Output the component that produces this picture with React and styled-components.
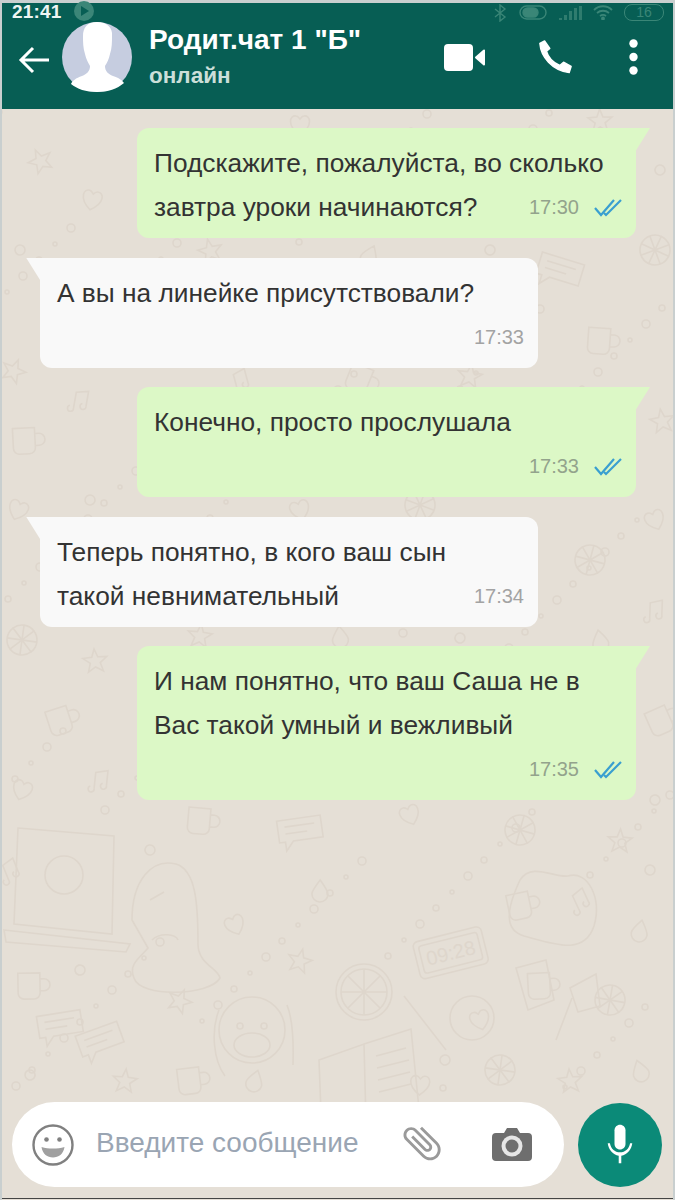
import React from "react";
import styled, { createGlobalStyle } from "styled-components";

const Global = createGlobalStyle`
  html, body { margin: 0; padding: 0; }
  body { background: #c9cfcf; font-family: "Liberation Sans", Arial, sans-serif; }
`;

const Frame = styled.div`
  width: 675px;
  height: 1200px;
  box-sizing: border-box;
  padding: 3px 2px 0 2px;
  display: flex;
  flex-direction: column;
  background: #c9cfcf;
`;

const Header = styled.header`
  height: 106px;
  flex: none;
  background: #075e54;
  display: flex;
  flex-direction: column;
  color: #fff;
`;

const StatusBar = styled.div`
  height: 15px;
  padding: 0 9px 0 10px;
  display: flex;
  align-items: center;
  gap: 12px;
`;

const Clock = styled.span`
  font-size: 19px;
  font-weight: 700;
  color: #eef5f3;
  letter-spacing: 0.2px;
  margin-top: 3px;
`;

const StatusIcons = styled.div`
  margin-left: auto;
  display: flex;
  align-items: center;
  gap: 11px;
  margin-top: 4px;
`;

const Battery = styled.span`
  width: 38px;
  height: 15px;
  border: 1.5px solid #3a8677;
  border-radius: 8px;
  color: #3a8677;
  font-size: 14px;
  line-height: 15px;
  text-align: center;
`;

const TopRow = styled.div`
  flex: 1;
  display: flex;
  align-items: flex-start;
  padding-left: 16px;
`;

const BackIcon = styled.svg`
  width: 32px;
  height: 28px;
  margin-top: 28px;
  flex: none;
`;

const Avatar = styled.svg`
  width: 70px;
  height: 70px;
  margin: 4px 0 0 12px;
  flex: none;
`;

const Titles = styled.div`
  margin-left: 17px;
  display: flex;
  flex-direction: column;
`;

const Title = styled.div`
  font-size: 28px;
  font-weight: 700;
  line-height: 30px;
  margin-top: 7px;
  white-space: nowrap;
`;

const Subtitle = styled.div`
  font-size: 22.5px;
  font-weight: 700;
  line-height: 26px;
  margin-top: 8px;
  color: #cbdfd9;
`;

const Actions = styled.div`
  margin-left: auto;
  display: flex;
  align-items: center;
  height: 78px;
  padding-right: 35px;
`;

const ActionIcon = styled.svg`
  flex: none;
  margin-left: ${(p) => p.$gap}px;
`;

const Chat = styled.main`
  flex: 1;
  min-height: 0;
  position: relative;
  background: #e5dfd6;
  display: flex;
  flex-direction: column;
`;

const Wallpaper = styled.svg`
  position: absolute;
  inset: 0;
  width: 100%;
  height: 100%;
`;

const Messages = styled.div`
  position: relative;
  flex: 1;
  padding: 19px 37px 0 38px;
  display: flex;
  flex-direction: column;
  gap: 19.5px;
`;

const Bubble = styled.div`
  position: relative;
  width: ${(p) => (p.$out ? 499 : 498)}px;
  box-sizing: border-box;
  padding: 13px 14px 9px 17px;
  align-self: ${(p) => (p.$out ? "flex-end" : "flex-start")};
  background: ${(p) => (p.$out ? "#dcf8c6" : "#f9f9f9")};
  border-radius: ${(p) => (p.$out ? "12px 0 12px 12px" : "0 12px 12px 12px")};
  &::before {
    content: "";
    position: absolute;
    top: 0;
    width: 15px;
    height: 24px;
    background: inherit;
    ${(p) =>
      p.$out
        ? "right: -14px; clip-path: polygon(0 0, 100% 0, 0 100%);"
        : "left: -14px; clip-path: polygon(0 0, 100% 0, 100% 100%);"}
  }
`;

const Line = styled.div`
  font-size: 26.3px;
  line-height: 44px;
  height: 44px;
  color: #333;
  white-space: nowrap;
`;

const LastLine = styled(Line)`
  display: flex;
  align-items: center;
  justify-content: space-between;
`;

const Meta = styled.span`
  margin-left: auto;
  display: flex;
  align-items: center;
  gap: 15px;
  font-size: 20px;
  color: ${(p) => (p.$out ? "#93a38c" : "#a3a3a3")};
`;

const Composer = styled.div`
  position: relative;
  flex: none;
  display: flex;
  align-items: center;
  gap: 14px;
  padding: 0 11px 0 10px;
  margin-bottom: 11px;
`;

const InputPill = styled.div`
  flex: 1;
  height: 85px;
  border-radius: 43px;
  background: #fff;
  display: flex;
  align-items: center;
  padding: 0 32px 0 20px;
`;

const Placeholder = styled.span`
  margin-left: 22px;
  padding-bottom: 4px;
  font-size: 28px;
  color: #9aa5b3;
  flex: 1;
  white-space: nowrap;
`;

const ClipIcon = styled.svg`
  flex: none;
  width: 46px;
  height: 46px;
  margin-bottom: 4px;
  transform: translateX(-2px) rotate(-45deg);
`;

const CameraIcon = styled.svg`
  flex: none;
  width: 40px;
  height: 33px;
  margin-left: 45px;
`;

const MicButton = styled.div`
  width: 84px;
  height: 84px;
  flex: none;
  border-radius: 50%;
  background: #0b8a78;
  display: flex;
  align-items: center;
  justify-content: center;
`;

const BottomEdge = styled.div`
  height: 1px;
  background: #444;
  flex: none;
  margin-bottom: 1px;
`;

const Ticks = () => (
  <svg width="28" height="19" viewBox="0 0 28 19" fill="none" stroke="#3a9fd0" strokeWidth="2.2">
    <path d="M1 10l6 7L20 2" />
    <path d="M10 15l2 2L27 2" />
  </svg>
);

const Doodle = ({ x, y, r = 0, s = 1, children }) => (
  <g transform={`translate(${x} ${y}) rotate(${r}) scale(${s})`}>{children}</g>
);

const star = <path d="M0-11l3 8 9 .5-7 5.5 2.5 8.5L0 7l-7.5 4.500L-5 3l-7-5.500 9-.5z" />;
const heart = <path d="M0 10C-14 0-10-10-4-9c2 0 3 2 4 3 1-1 2-3 4-3 6-1 10 9-4 19z" />;
const drop = <path d="M0-10C6-2 8 1 8 4a8 8 0 0 1-16 0c0-3 2-6 8-14z" />;
const ring = <circle r="5" />;
const note = <path d="M-5 9V-7l12-3v15M-5 9a3 3 0 1 1-4-2M7 5a3 3 0 1 1-4-2" />;
const bubbleIcon = <path d="M-22-12h44v22H-8l-8 9v-9h-6z M-15-5h30M-15 2h22" />;
const cup = <path d="M-12-12h22v20a6 6 0 0 1-6 6h-10a6 6 0 0 1-6-6zM10-6h4a5 5 0 0 1 0 12h-4" />;
const planet = <g><circle r="15" /><path d="M-15 0h30M0-15v30M-11-11l22 22M11-11l-22 22" /></g>;

const scatter = [
  [40, 160, star], [92, 200, heart], [20, 250, ring], [70, 300, drop], [14, 370, star], [80, 400, note],
  [25, 440, cup], [90, 500, ring], [18, 510, heart], [22, 640, planet], [95, 660, star], [60, 720, cup],
  [22, 790, heart], [100, 780, note], [660, 170, ring], [655, 250, planet], [560, 270, bubbleIcon], [600, 340, cup],
  [662, 420, star], [655, 520, heart], [590, 560, planet], [655, 610, note], [600, 640, drop], [660, 720, cup],
  [655, 800, ring], [300, 125, heart], [210, 250, star], [370, 255, drop], [490, 250, ring], [600, 120, star],
  [240, 380, note], [360, 378, cup], [470, 375, star], [90, 350, ring], [300, 510, heart], [420, 505, planet],
  [200, 635, star], [340, 636, drop], [460, 638, ring], [100, 590, drop], [200, 820, cup], [300, 830, bubbleIcon],
  [410, 815, heart], [520, 830, planet], [620, 840, star], [150, 850, ring], [235, 925, heart], [300, 960, star],
  [320, 890, drop], [520, 905, cup], [580, 900, note], [640, 930, drop], [30, 985, cup], [80, 970, ring],
  [180, 1000, star], [610, 1000, planet], [540, 985, cup], [480, 1020, heart], [445, 1060, ring], [500, 1070, planet],
  [570, 1080, star], [640, 1070, drop], [30, 1075, ring], [125, 1080, star], [190, 1080, cup], [100, 1040, bubbleIcon],
  [255, 1080, drop], [420, 1085, heart], [60, 1025, bubbleIcon], [10, 870, note], [650, 870, ring],
];

// мелкие кружки между рисунками
const specks = Array.from({ length: 150 }, (_, i) => [
  (i * 97) % 671,
  112 + ((i * 211) % 990),
  2 + (i % 3),
]);

const WallpaperArt = () => (
  <Wallpaper viewBox="0 0 671 1091" preserveAspectRatio="none" fill="none" stroke="#ded6cc" strokeWidth="1.6">
    <g transform="translate(-2 -109)">
      {specks.map(([x, y, r], i) => (
        <circle key={i} cx={x} cy={y} r={r} />
      ))}
      {scatter.map(([x, y, shape], i) => (
        <Doodle key={i} x={x} y={y} r={(i * 37) % 50 - 25}>{shape}</Doodle>
      ))}
      {/* ноутбук */}
      <path d="M18 828l96 8-2 98-98-10zM4 930l126 14-4 8-120-10z" />
      <circle cx="64" cy="875" r="19" />
      {/* будильник */}
      <g transform="rotate(-14 450 954)">
        <rect x="416" y="934" width="70" height="38" rx="5" />
        <rect x="421" y="939" width="60" height="28" rx="3" />
        <text x="451" y="960" fontSize="20" textAnchor="middle" fill="#ded6cc" stroke="none" fontFamily="Liberation Sans">09:28</text>
      </g>
      {/* апельсин */}
      <circle cx="364" cy="992" r="28" />
      <circle cx="364" cy="992" r="23" />
      <path d="M364 969v46M341 992h46M348 976l32 32M380 976l-32 32" />
      {/* обезьяна */}
      <circle cx="252" cy="1030" r="33" />
      <ellipse cx="252" cy="1045" rx="18" ry="12" />
      <circle cx="240" cy="1026" r="3" />
      <circle cx="264" cy="1026" r="3" />
      <path d="M219 1010c-8 20-6 50 6 66M287 1005c8 20 6 50 6 60" />
      {/* книга */}
      <path d="M319 1060l45-16 2 78-44 16zM364 1044l47-15 8 80-53 13zM376 1056l30-8M377 1068l32-8M378 1080l32-8M379 1092l32-8" />
      {/* динозавр */}
      <path d="M132 920c0-40 20-62 44-56 20 6 22 40 22 80 0 20 20 24 22 34-10 18-80 20-86 0-6-14 6-20 14-30z" />
      <path d="M150 900l14-8M152 940c8-8 24-6 26 0" />
      {/* кружка, очки, лампа */}
      <path d="M516 968l30-8 8 40-26 10zM572 998l-16 42M596 974l-26 14 8 24 22-6zM404 996l42 54" />
      <circle cx="472" cy="1018" r="22" />
      <path d="M520 880c-14 30-16 50 4 56 30 8 60 20 70-10 8-28-6-56-26-50-14 2-36-14-48 4z" />
    </g>
  </Wallpaper>
);

const App = () => (
  <>
    <Global />
    <Frame>
      <Header>
        <StatusBar>
          <Clock>21:41</Clock>
          <svg width="20" height="20" viewBox="0 0 20 20">
            <circle cx="10" cy="10" r="10" fill="#3b8678" />
            <path d="M7 5l8 5-8 5z" fill="#075e54" />
          </svg>
          <StatusIcons>
            <svg width="16" height="18" viewBox="0 0 16 18" fill="none" stroke="#3a8677" strokeWidth="1.4">
              <path d="M3 5l10 8-5 4V1l5 4-10 8" />
            </svg>
            <svg width="28" height="17" viewBox="0 0 28 17" fill="none" stroke="#3a8677" strokeWidth="1.4">
              <rect x="1" y="2" width="26" height="13" rx="6.500" />
              <rect x="4" y="4" width="15" height="9" rx="4.500" fill="#3a8677" />
            </svg>
            <svg width="24" height="14" viewBox="0 0 24 14" fill="#2f7c6e">
              <path d="M1 12h3v2H1zM6 9h3v5H6zM11 5h3v9h-3zM16 2h3v12h-3zM21 0h3v14h-3z" />
            </svg>
            <svg width="20" height="15" viewBox="0 0 20 15" fill="none" stroke="#3a8677" strokeWidth="1.800">
              <path d="M1 5c5-5 13-5 18 0M4 8c3.500-3 8.500-3 12 0M7 11c2-1.500 4-1.500 6 0" />
              <circle cx="10" cy="13.500" r="1" fill="#3a8677" />
            </svg>
            <Battery>16</Battery>
          </StatusIcons>
        </StatusBar>
        <TopRow>
          <BackIcon viewBox="0 0 32 28" fill="none" stroke="#fff" strokeWidth="3">
            <path d="M31 14H3M15 2L3 14l12 12" />
          </BackIcon>
          <Avatar viewBox="0 0 70 70">
            <circle cx="35" cy="35" r="35" fill="#c6cde0" />
            <path d="M35 0c-10 0-14 6-14 14 0 6 0 12 2 18 1 5 4 10 5 12 0 5-3 8-8 10-6 2-10 5-11 8 6 5 15 8 26 8 11 0 20-3 27-9-2-3-5-5-11-7-5-2-8-5-8-10 2-3 4-7 5-12 2-6 2-12 2-18C51 6 45 0 35 0z" fill="#fff" />
          </Avatar>
          <Titles>
            <Title>Родит.чат 1 "Б"</Title>
            <Subtitle>онлайн</Subtitle>
          </Titles>
          <Actions>
            <ActionIcon $gap={0} width="41" height="27" viewBox="0 0 41 27" fill="#fff">
              <rect x="0" y="0" width="29" height="27" rx="4" />
              <path d="M32 13.500l8-7v14z" stroke="#fff" strokeWidth="2" strokeLinejoin="round" />
            </ActionIcon>
            <ActionIcon $gap={52} width="36" height="36" viewBox="0 0 38 38" fill="none">
              <path d="M8 2L3 4.500C4 19 16 33 34 35.500l2-6.500-8-4.500-4 3.500C17 25 12 20 10 13l3.500-3z" fill="#fff" stroke="#fff" strokeWidth="1.500" strokeLinejoin="round" />
            </ActionIcon>
            <ActionIcon $gap={56} width="9" height="36" viewBox="0 0 9 36" fill="#fff">
              <circle cx="4.500" cy="4.500" r="4.200" />
              <circle cx="4.500" cy="18" r="4.200" />
              <circle cx="4.500" cy="31.500" r="4.200" />
            </ActionIcon>
          </Actions>
        </TopRow>
      </Header>
      <Chat>
        <WallpaperArt />
        <Messages>
          <Bubble $out>
            <Line>Подскажите, пожалуйста, во сколько</Line>
            <LastLine>
              завтра уроки начинаются?
              <Meta $out>17:30 <Ticks /></Meta>
            </LastLine>
          </Bubble>
          <Bubble>
            <Line>А вы на линейке присутствовали?</Line>
            <LastLine>
              <Meta>17:33</Meta>
            </LastLine>
          </Bubble>
          <Bubble $out>
            <Line>Конечно, просто прослушала</Line>
            <LastLine>
              <Meta $out>17:33 <Ticks /></Meta>
            </LastLine>
          </Bubble>
          <Bubble>
            <Line>Теперь понятно, в кого ваш сын</Line>
            <LastLine>
              такой невнимательный
              <Meta>17:34</Meta>
            </LastLine>
          </Bubble>
          <Bubble $out>
            <Line>И нам понятно, что ваш Саша не в</Line>
            <Line>Вас такой умный и вежливый</Line>
            <LastLine>
              <Meta $out>17:35 <Ticks /></Meta>
            </LastLine>
          </Bubble>
        </Messages>
        <Composer>
          <InputPill>
            <svg width="42" height="42" viewBox="0 0 42 42" fill="none" stroke="#808080" strokeWidth="2.400">
              <circle cx="21" cy="21" r="19.500" />
              <circle cx="14.500" cy="15.500" r="2.300" fill="#808080" stroke="none" />
              <circle cx="27.500" cy="15.500" r="2.300" fill="#808080" stroke="none" />
              <path d="M9.500 23c7 2 16 2 23 0-1 7-6 10.500-11.500 10.500S10.500 30 9.500 23z" fill="#a0a0a0" stroke="none" />
            </svg>
            <Placeholder>Введите сообщение</Placeholder>
            <ClipIcon viewBox="0 0 24 24" fill="#9a9a9a">
              <path d="M16.500 6v11.500c0 2.210-1.790 4-4 4s-4-1.790-4-4V5c0-1.380 1.120-2.500 2.500-2.500s2.500 1.120 2.500 2.500v10.500c0 .55-.45 1-1 1s-1-.45-1-1V6H10v9.500c0 1.380 1.120 2.500 2.500 2.500s2.500-1.120 2.500-2.500V5c0-2.210-1.790-4-4-4S7 2.790 7 5v12.500c0 3.040 2.460 5.500 5.500 5.500s5.500-2.460 5.500-5.500V6h-1.500z" />
            </ClipIcon>
            <CameraIcon viewBox="0 0 40 33">
              <path d="M4 5h8l3-5h10l3 5h8a4 4 0 0 1 4 4v20a4 4 0 0 1-4 4H4a4 4 0 0 1-4-4V9a4 4 0 0 1 4-4z" fill="#6e6e6e" />
              <circle cx="20" cy="18" r="10.500" fill="#e6e6e6" />
              <circle cx="20" cy="18" r="6.500" fill="#6e6e6e" />
            </CameraIcon>
          </InputPill>
          <MicButton>
            <svg width="44" height="44" viewBox="0 0 24 24" fill="#fff">
              <path d="M12 14.500c1.660 0 3-1.340 3-3V4c0-1.660-1.340-3-3-3S9 2.340 9 4v7.500c0 1.660 1.340 3 3 3z" />
              <path d="M17.500 11c-.4 2.800-2.600 5-5.500 5s-5.100-2.200-5.500-5H5.300c.4 3.500 2.900 6.200 6 6.800V22h1.400v-4.200c3.100-.6 5.600-3.300 6-6.800z" />
            </svg>
          </MicButton>
        </Composer>
        <BottomEdge />
      </Chat>
    </Frame>
  </>
);

export default App;
